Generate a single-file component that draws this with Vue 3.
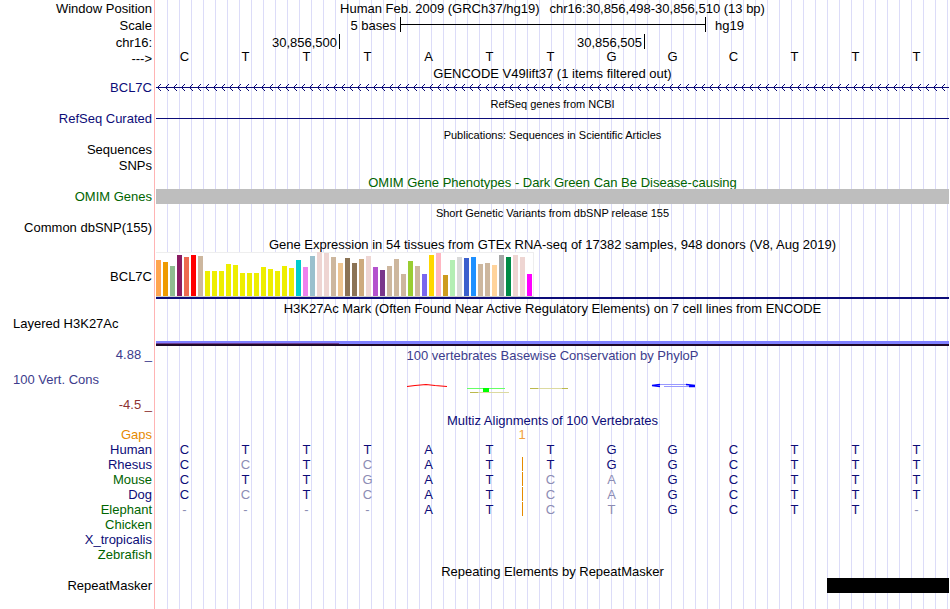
<template>
  <main class="browser">
    <div class="row position">
      <div class="label">Window Position</div>
      <div class="track title">
        <span>Human Feb. 2009 (GRCh37/hg19)</span>
        <span>chr16:30,856,498-30,856,510 (13 bp)</span>
      </div>
    </div>
    <div class="row scale">
      <div class="label">Scale</div>
      <div class="track bases">
        <span class="scale-size">5 bases</span>
        <span class="scale-bar"></span>
        <span class="scale-db">hg19</span>
      </div>
    </div>
    <div class="row ruler">
      <div class="label">chr16:</div>
      <div class="track bases">
        <span class="coord first">30,856,500</span>
        <span class="coord second">30,856,505</span>
        <span class="tick"></span>
      </div>
    </div>
    <div class="row sequence">
      <div class="label">---&gt;</div>
      <div class="track bases">
        <span v-for="(base, i) in sequence" :key="i" class="base">{{ base }}</span>
      </div>
    </div>

    <div class="row heading tight"><h2 class="track title">GENCODE V49lift37 (1 items filtered out)</h2></div>
    <div class="row navy">
      <div class="label">BCL7C</div>
      <svg class="track gene" height="15">
        <defs>
          <pattern id="arrows" width="8" height="15" patternUnits="userSpaceOnUse">
            <path d="M1 7h1v1h-1zM2 6h1v1h-1zM2 8h1v1h-1zM3 5h1v1h-1zM3 9h1v1h-1zM4 4h1v1h-1zM4 10h1v1h-1z" fill="#0c0c78" />
          </pattern>
        </defs>
        <rect width="100%" height="15" fill="url(#arrows)" />
        <rect y="7" width="100%" height="1" fill="#0c0c78" />
      </svg>
    </div>

    <div class="row heading"><h2 class="track title small">RefSeq genes from NCBI</h2></div>
    <div class="row navy">
      <div class="label">RefSeq Curated</div>
      <div class="track curated"></div>
    </div>

    <div class="row heading"><h2 class="track title small">Publications: Sequences in Scientific Articles</h2></div>
    <div class="row"><div class="label">Sequences</div></div>
    <div class="row tall"><div class="label">SNPs</div></div>

    <div class="row heading green"><h2 class="track title">OMIM Gene Phenotypes - Dark Green Can Be Disease-causing</h2></div>
    <div class="row green">
      <div class="label">OMIM Genes</div>
      <div class="track omim"></div>
    </div>

    <div class="row heading"><h2 class="track title small">Short Genetic Variants from dbSNP release 155</h2></div>
    <div class="row"><div class="label">Common dbSNP(155)</div></div>

    <div class="row heading">
      <h2 class="track title">Gene Expression in 54 tissues from GTEx RNA-seq of 17382 samples, 948 donors (V8, Aug 2019)</h2>
    </div>
    <div class="row gtex">
      <div class="label">BCL7C</div>
      <div class="track expression">
        <div class="bars">
          <span v-for="(bar, i) in tissues" :key="i" class="bar" :style="{ height: bar[0] + 'px', background: bar[1] }"></span>
        </div>
      </div>
    </div>

    <div class="row heading loose">
      <h2 class="track title">H3K27Ac Mark (Often Found Near Active Regulatory Elements) on 7 cell lines from ENCODE</h2>
    </div>
    <div class="row histone">
      <div class="label left">Layered H3K27Ac</div>
      <div class="track signal bases"><span></span></div>
    </div>

    <div class="row heading blue">
      <div class="label">4.88 _</div>
      <h2 class="track title">100 vertebrates Basewise Conservation by PhyloP</h2>
    </div>
    <div class="row conservation">
      <div class="label left blue">100 Vert. Cons</div>
      <svg class="track" height="35" viewBox="0 0 793 35" preserveAspectRatio="none">
        <path d="M251 24.500L259 23.500L270 22.500L279 23.500L291 24.500" fill="none" stroke="#f00" stroke-width="1.200" />
        <path d="M311 26.500h38" stroke="#6f6" />
        <rect x="327" y="26" width="6" height="4" fill="#0f0" />
        <path d="M314 30.500h8M374 26.500h8M406 26.500h6" stroke="#bbb94c" />
        <path d="M322 30.500h31M382 26.500h24" stroke="#dcdaa0" />
        <path d="M504 22.500H533M508 24.500H533" stroke="#99f" />
        <path d="M504 22.500L496 23.500L504 24.500M530 22.500L539 23.500M533 24.500H539" fill="none" stroke="#00f" stroke-width="1.400" />
      </svg>
    </div>
    <div class="row minimum"><div class="label red">-4.5 _</div></div>

    <div class="row heading navy"><h2 class="track title">Multiz Alignments of 100 Vertebrates</h2></div>
    <table class="alignment">
      <tbody>
        <tr v-for="row in alignment" :key="row.name">
          <th scope="row" :class="row.color">{{ row.name }}</th>
          <td
            v-for="(base, i) in row.bases"
            :key="i"
            :class="{ faded: base !== sequence[i], insert: row.insert && i === 6 }"
          >{{ base }}</td>
          <template v-if="row.gap">
            <td colspan="5"></td>
            <td colspan="2" class="gap">{{ row.gap }}</td>
            <td colspan="6"></td>
          </template>
        </tr>
      </tbody>
    </table>

    <div class="row heading"><h2 class="track title">Repeating Elements by RepeatMasker</h2></div>
    <div class="row">
      <div class="label">RepeatMasker</div>
      <div class="track bases"><span class="repeat"></span></div>
    </div>
  </main>
</template>

<script setup>
const sequence = 'CTTTATTGGCTTT'

// [height, color] per GTEx tissue
const tissues = [
  [36, '#ffa54f'], [34, '#ee9a00'], [30, '#8fbc8f'], [41, '#8b1c62'], [39, '#ee6a50'], [41, '#ff0000'],
  [40, '#cdb79e'], [25, '#eeee00'], [25, '#eeee00'], [25, '#eeee00'], [32, '#eeee00'], [31, '#eeee00'],
  [23, '#eeee00'], [23, '#eeee00'], [23, '#eeee00'], [29, '#eeee00'], [27, '#eeee00'], [25, '#eeee00'],
  [30, '#eeee00'], [28, '#eeee00'], [36, '#00cdcd'], [29, '#ee82ee'], [40, '#9ac0cd'], [44, '#eed5d2'],
  [43, '#eed5d2'], [39, '#cdb79e'], [33, '#eec591'], [38, '#8b7355'], [33, '#8b7355'], [37, '#cdaa7d'],
  [40, '#eed5d2'], [29, '#b452cd'], [26, '#7a378b'], [30, '#cdb79e'], [37, '#cdb79e'], [22, '#cdb79e'],
  [35, '#9acd32'], [30, '#cdb79e'], [22, '#7a67ee'], [41, '#ffd700'], [43, '#ffb6c1'], [21, '#cd9b1d'],
  [36, '#b4eeb4'], [39, '#d9d9d9'], [38, '#3a5fcd'], [39, '#1e90ff'], [32, '#cdb79e'], [33, '#cdb79e'],
  [31, '#ffd39b'], [41, '#a6a6a6'], [39, '#008b45'], [41, '#eed5d2'], [39, '#eed5d2'], [22, '#ff00ff']
]

const alignment = [
  { name: 'Gaps', color: 'orange', bases: '', gap: '1' },
  { name: 'Human', color: 'navy', bases: 'CTTTATTGGCTTT' },
  { name: 'Rhesus', color: 'navy', bases: 'CCTCATTGGCTTT', insert: true },
  { name: 'Mouse', color: 'green', bases: 'CTTGATCAGCTTT', insert: true },
  { name: 'Dog', color: 'navy', bases: 'CCTCATCAGCTTT', insert: true },
  { name: 'Elephant', color: 'green', bases: '----ATCTGCTT-', insert: true },
  { name: 'Chicken', color: 'green', bases: '' },
  { name: 'X_tropicalis', color: 'navy', bases: '' },
  { name: 'Zebrafish', color: 'green', bases: '' }
]
</script>

<style>
body {
  margin: 0;
  background: #fff;
}
</style>

<style scoped>
.browser {
  box-sizing: border-box;
  min-height: 100vh;
  padding-right: 1px;
  font-family: "Liberation Sans", Arial, sans-serif;
  font-size: 13px;
  line-height: 15px;
  color: #000;
  background:
    linear-gradient(#ffb4b4, #ffb4b4) 154px 0 / 1px 100% no-repeat,
    repeating-linear-gradient(to right, #dcdcf8 0, #dcdcf8 1px, transparent 1px, transparent 12px) 167px 0 no-repeat;
}
.row {
  display: grid;
  grid-template-columns: 152px minmax(0, 1fr);
  column-gap: 4px;
  height: 15px;
}
.label {
  grid-column: 1;
  text-align: right;
  white-space: nowrap;
}
.label.left {
  padding-left: 13px;
  text-align: left;
}
.track {
  grid-column: 2;
  width: 100%;
}
.title {
  margin: 0;
  font-size: 13px;
  font-weight: normal;
  text-align: center;
  white-space: nowrap;
}
.title.small {
  font-size: 11px;
}
.heading {
  height: 16px;
  line-height: 19px;
}
.heading .label {
  line-height: 17px;
}
.heading.tight {
  height: 14px;
  line-height: 15px;
}
.heading.loose {
  height: 18px;
}
.tall {
  height: 16px;
  line-height: 17px;
}
.navy {
  color: #0c0c78;
}
.green {
  color: #006400;
}
.orange {
  color: #e68a00;
}
.blue {
  color: #3c3c8c;
}
.red {
  color: #8c3232;
}

.bases {
  display: grid;
  grid-template-columns: repeat(13, minmax(0, 1fr));
}
.position {
  height: 17px;
  line-height: 17px;
}
.position .title {
  display: flex;
  justify-content: center;
  gap: 10px;
}
.scale {
  height: 16px;
  line-height: 17px;
}
.scale-size {
  grid-column: 1 / 5;
  padding-right: 4px;
  text-align: right;
}
.scale-bar {
  grid-column: 5 / 10;
  height: 15px;
  margin-right: -1px;
  border: solid #000;
  border-width: 0 1px;
  background: linear-gradient(#000, #000) 0 7px / 100% 1px no-repeat;
}
.scale-db {
  grid-column: 10 / 12;
  padding-left: 10px;
}
.ruler {
  height: 17px;
  line-height: 19px;
}
.coord {
  padding-right: 2px;
  text-align: right;
}
.coord.first {
  grid-column: 1 / 4;
}
.coord.second {
  grid-column: 4 / 9;
}
.coord.second,
.tick {
  height: 15px;
  margin-top: 1px;
  line-height: 17px;
  border-left: 1px solid #000;
}
.sequence {
  height: 16px;
  line-height: 17px;
}
.base {
  padding-right: 4px;
  line-height: 14px;
  text-align: center;
}
.gene {
  display: block;
}
.curated {
  height: 1px;
  margin-top: 7px;
  background: #0c0c78;
}
.omim {
  height: 15px;
  background: #bebebe;
}
.gtex {
  height: 48px;
}
.gtex .label {
  line-height: 52px;
}
.expression {
  box-sizing: border-box;
  height: 48px;
  padding-top: 1px;
  border-bottom: 2px solid #0c0c78;
}
.bars {
  box-sizing: border-box;
  display: flex;
  align-items: flex-end;
  gap: 2px;
  width: 378px;
  height: 45px;
  border: solid #eee;
  border-width: 1px 1px 1px 0;
  border-bottom-color: #ccc;
  background: #fff;
}
.bar {
  width: 5px;
  flex: none;
}
.histone {
  height: 29px;
  line-height: 13px;
}
.signal {
  align-self: end;
  height: 5px;
  background: linear-gradient(#8080ff 3px, #1e0828 3px);
}
.signal span {
  grid-column: 1 / 4;
  height: 1px;
  margin-top: 2px;
  background: #6e3c96;
}
.conservation {
  height: 35px;
  line-height: 36px;
}
.minimum {
  height: 14px;
}
.alignment {
  width: 100%;
  table-layout: fixed;
  border-collapse: separate;
  border-spacing: 0;
  line-height: 14px;
  color: #0c0c78;
}
.alignment th {
  width: 152px;
  padding: 1px 4px 0 0;
  font-weight: normal;
  text-align: right;
}
.alignment td {
  padding: 1px 4px 0 0;
  text-align: center;
}
.alignment .faded {
  color: #8c8cb4;
}
.alignment .insert {
  background: linear-gradient(#e68a00, #e68a00) 0 0 / 1px 14px no-repeat;
}
.alignment .gap {
  padding-right: 0;
  color: #f0a040;
}
.repeat {
  grid-column: 12 / 14;
  height: 15px;
  background: #000;
}
</style>
